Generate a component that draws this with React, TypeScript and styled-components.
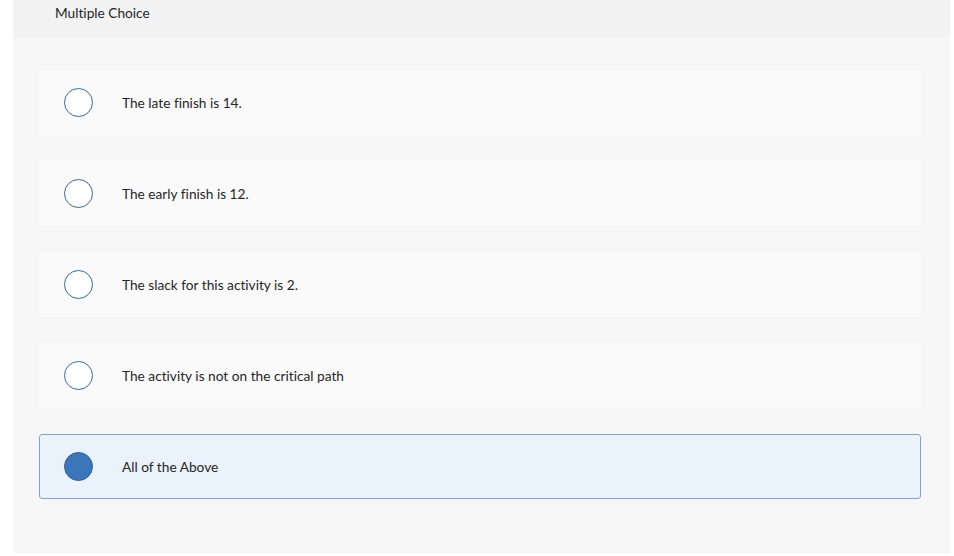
import React from "react";
import styled, { createGlobalStyle } from "styled-components";

const GlobalStyle = createGlobalStyle`
  html, body {
    margin: 0;
    padding: 0;
    background: #ffffff;
  }

  body {
    font-family: Lato, "Open Sans", "Liberation Sans", sans-serif;
    font-variant-ligatures: none;
    color: #222222;
  }
`;

const Panel = styled.div`
  margin-left: 13px;
  width: 937px;
  height: 553px;
  background: #f6f6f6;
  display: flex;
  flex-direction: column;
`;

const Header = styled.div`
  height: 37px;
  background: #f2f2f2;
  display: flex;
  align-items: center;
  padding-left: 42px;
  padding-bottom: 13px;
  box-sizing: border-box;
  font-size: 13.7px;
  color: #262626;
`;

const Choices = styled.div`
  display: flex;
  flex-direction: column;
  gap: 26px;
  padding: 33px 29px 0 26px;
`;

const Choice = styled.label<{ $selected?: boolean }>`
  height: 65px;
  box-sizing: border-box;
  display: flex;
  align-items: center;
  gap: 29px;
  padding-left: ${(p) => (p.$selected ? "24px" : "25px")};
  border-radius: 3px;
  background: ${(p) => (p.$selected ? "#eaf2fc" : "#fafafa")};
  border: ${(p) => (p.$selected ? "1px solid #7fa3d2" : "none")};
  cursor: pointer;
`;

const Radio = styled.span<{ $checked?: boolean }>`
  width: 29px;
  height: 29px;
  box-sizing: border-box;
  border-radius: 50%;
  flex-shrink: 0;
  border: 1.5px solid ${(p) => (p.$checked ? "#2f629c" : "#3a679c")};
  background: ${(p) => (p.$checked ? "#3a76b9" : "#ffffff")};
`;

const ChoiceText = styled.span`
  font-size: 13.7px;
  color: #262626;
`;

const options = [
  "The late finish is 14.",
  "The early finish is 12.",
  "The slack for this activity is 2.",
  "The activity is not on the critical path",
  "All of the Above",
];

export default function App() {
  const selected = 4;

  return (
    <>
      <GlobalStyle />
      <Panel>
        <Header>Multiple Choice</Header>
        <Choices>
          {options.map((text, i) => (
            <Choice key={text} $selected={i === selected}>
              <Radio $checked={i === selected} />
              <ChoiceText>{text}</ChoiceText>
            </Choice>
          ))}
        </Choices>
      </Panel>
    </>
  );
}
